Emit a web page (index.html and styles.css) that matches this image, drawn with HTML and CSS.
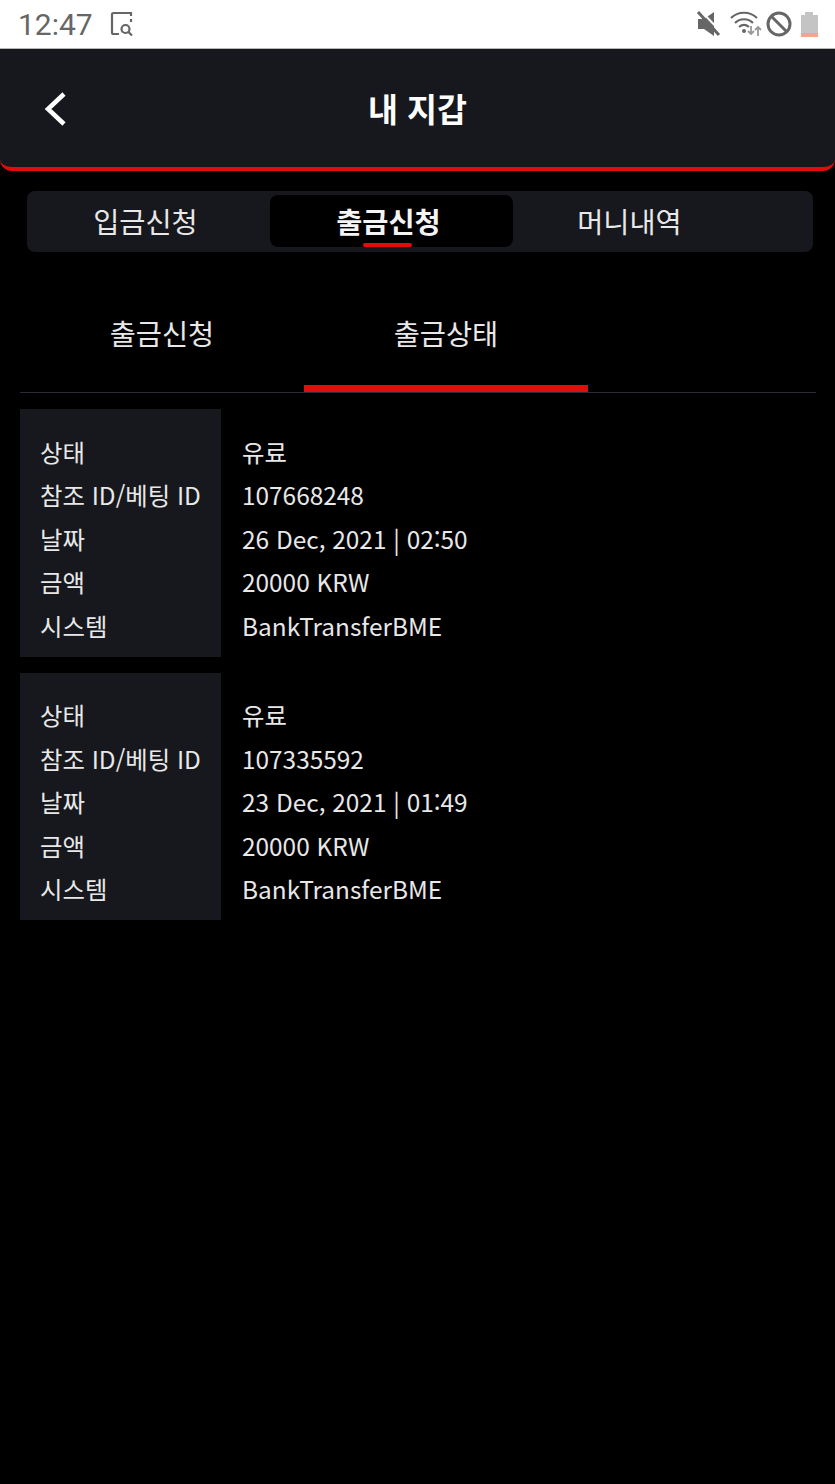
FILE: index.html
```html
<!DOCTYPE html>
<html lang="ko">

<head>
<meta charset="UTF-8">
<meta name="viewport" content="width=device-width, initial-scale=1.0">
<title>내 지갑</title>
<link rel="stylesheet" href="styles.css">
</head>

<body>

<div class="status-bar">
    <div class="status-left">
        <span class="clock">12:47</span>
        <svg class="icon-scan" width="26" height="26" viewBox="0 0 26 26" fill="none" stroke="#666" stroke-width="2.2">
            <path d="M21 5V2H3.5a1.5 1.5 0 0 0-1.500 1.500V21.500A1.500 1.500 0 0 0 3.500 23H9"/>
            <path d="M21 8v3"/>
            <circle cx="15.500" cy="18" r="4"/>
            <path d="M18.500 21l3.500 3.500"/>
        </svg>
    </div>
    <div class="status-right">
        <svg width="26" height="26" viewBox="0 0 26 26">
            <path d="M2 8h6l10-7v24l-10-7H2z" fill="#666"/>
            <path d="M5 0l21 22" stroke="#fff" stroke-width="2"/>
            <path d="M2 1l21 23" stroke="#666" stroke-width="3"/>
        </svg>
        <svg class="wifi" width="32" height="26" viewBox="0 0 32 26" fill="none" stroke="#666">
            <path d="M1 7C8 0 20 0 27 7" stroke-width="2.200"/>
            <path d="M5 12c5-5 13-5 18 0" stroke-width="2.200"/>
            <path d="M9 16c3-2.500 7-2.500 10 0" stroke-width="2.200"/>
            <circle cx="14" cy="20" r="2" fill="#666" stroke="none"/>
            <path d="M21 15v8m-3-3l3 3 3-3" stroke="#999" stroke-width="1.800"/>
            <path d="M28 25v-9m-3 3l3-3 3 3" stroke="#999" stroke-width="1.800"/>
        </svg>
        <svg width="26" height="26" viewBox="0 0 26 26" fill="none" stroke="#666" stroke-width="3">
            <circle cx="13" cy="13" r="11"/>
            <path d="M5 5l16 16"/>
        </svg>
        <div class="battery">
            <div class="battery-cap"></div>
            <div class="battery-body"><div class="battery-low"></div></div>
        </div>
    </div>
</div>

<header class="app-header">
    <svg class="back" width="24" height="36" viewBox="0 0 24 36" fill="none" stroke="#fff" stroke-width="4.500">
        <path d="M21 3L5 18l16 15"/>
    </svg>
    <h1>내 지갑</h1>
</header>

<nav class="main-tabs">
    <a class="main-tab">입금신청</a>
    <a class="main-tab active">출금신청</a>
    <a class="main-tab last">머니내역</a>
</nav>

<div class="sub-tabs">
    <a class="sub-tab">출금신청</a>
    <a class="sub-tab active">출금상태</a>
</div>

<div class="record">
    <div class="labels">
        <div>상태</div>
        <div>참조 ID/베팅 ID</div>
        <div>날짜</div>
        <div>금액</div>
        <div>시스템</div>
    </div>
    <div class="values">
        <div>유료</div>
        <div>107668248</div>
        <div>26 Dec, 2021 | 02:50</div>
        <div>20000 KRW</div>
        <div>BankTransferBME</div>
    </div>
</div>

<div class="record">
    <div class="labels">
        <div>상태</div>
        <div>참조 ID/베팅 ID</div>
        <div>날짜</div>
        <div>금액</div>
        <div>시스템</div>
    </div>
    <div class="values">
        <div>유료</div>
        <div>107335592</div>
        <div>23 Dec, 2021 | 01:49</div>
        <div>20000 KRW</div>
        <div>BankTransferBME</div>
    </div>
</div>

</body>
</html>
```

FILE: styles.css
```css
* { box-sizing: border-box; }
body { margin: 0; min-height: 1484px; background-color: #000; color: #e8e8e8; font-family: "Noto Sans CJK KR", "Noto Sans", sans-serif; font-size: 24.400px; }

.status-bar { height: 49px; background-color: #fff; border-bottom: 1px solid #b8b8b8; display: flex; justify-content: space-between; align-items: center; padding: 0 17px 0 18px; }
.status-left { display: flex; align-items: center; gap: 17px; }
.clock { font-family: Roboto, sans-serif; font-size: 30px; color: #666; }
.status-right { display: flex; align-items: center; gap: 4px; }
.wifi { margin-left: 4px; }
.battery { width: 18px; display: flex; flex-direction: column; align-items: center; margin-left: 4px; margin-top: 1px; }
.battery-cap { width: 8px; height: 3px; background-color: #c4c4c4; }
.battery-body { width: 17px; height: 22px; background-color: #c4c4c4; display: flex; align-items: flex-end; }
.battery-low { width: 100%; height: 4px; background-color: #f8a48c; }

.app-header { height: 122px; background-color: #17181d; border-bottom: 4px solid #e20c0c; border-radius: 0 0 12px 12px; display: flex; align-items: center; justify-content: center; position: relative; padding-bottom: 2px; }
.app-header h1 { margin: 0; font-size: 32.600px; font-weight: 700; color: #fff; }
.back { position: absolute; left: 43px; top: 42px; }

.main-tabs { height: 61px; margin: 20px 22px 0 27px; padding: 4px 0 5px; background-color: #17181d; border-radius: 8px; display: flex; }
.main-tab { width: 243px; padding: 0 6px 1px 0; display: flex; align-items: center; justify-content: center; font-size: 28.400px; border-radius: 8px; position: relative; }
.main-tab.last { padding-right: 10px; }
.main-tab.active { background-color: #000; color: #f4f4f4; font-weight: 700; }
.main-tab.active::after { content: ""; position: absolute; left: 93px; bottom: 0; width: 49px; height: 4px; border-radius: 2px; background-color: #e20c0c; }

.sub-tabs { height: 141px; margin: 0 19px 0 20px; padding-top: 40px; display: flex; border-bottom: 1px solid #2a2c36; }
.sub-tab { width: 284px; height: 100px; display: flex; justify-content: center; align-items: center; font-size: 28.400px; padding-bottom: 19px; }
.sub-tab.active { border-bottom: 7px solid #e20c0c; padding-bottom: 12px; }

.record { display: flex; margin: 16px 19px 0 20px; line-height: 43.600px; }
.labels { width: 201px; height: 247.500px; padding: 20.600px 0 0 20px; background-color: #17181d; white-space: nowrap; }
.values { padding: 20.600px 0 0 21px; }
```
